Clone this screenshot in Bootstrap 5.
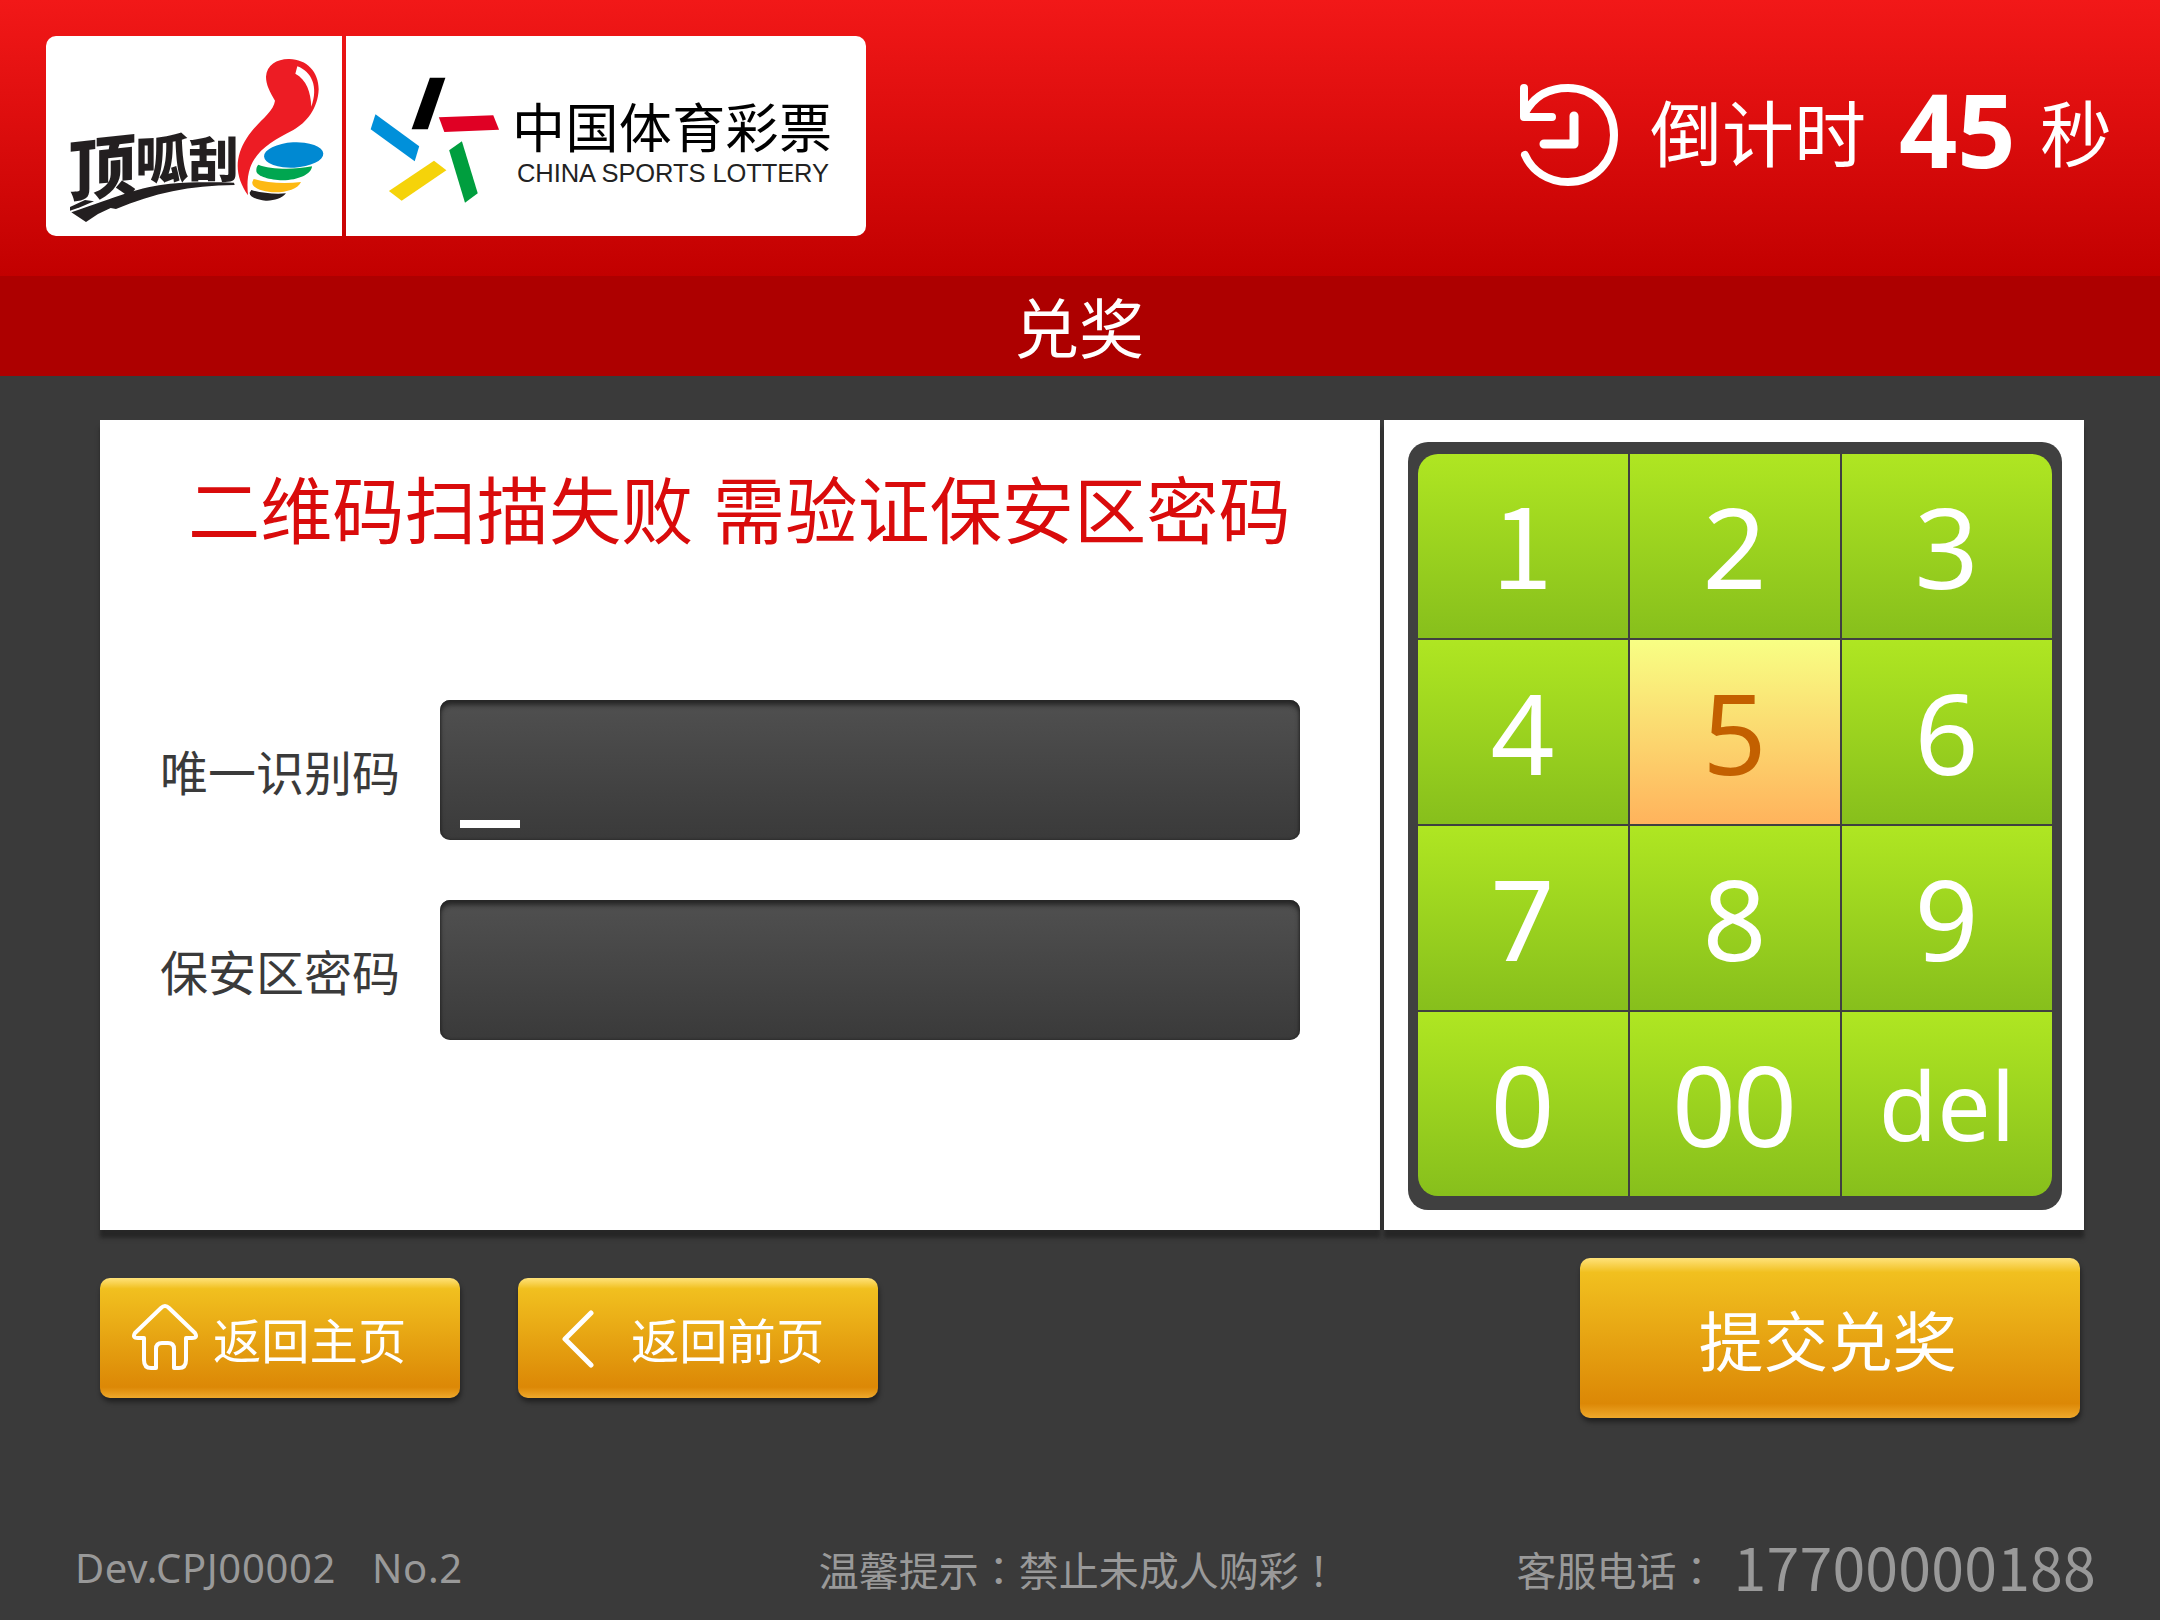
<!DOCTYPE html>
<html lang="zh-CN">
<head>
<meta charset="utf-8">
<title>兑奖</title>
<link href="https://cdn.jsdelivr.net/npm/bootstrap@5.3.0/dist/css/bootstrap.min.css" rel="stylesheet">
<script src="https://cdn.jsdelivr.net/npm/bootstrap@5.3.0/dist/js/bootstrap.bundle.min.js"></script>
<style>
body{width:2160px;height:1620px;overflow:hidden;background:#3a3a3a;font-family:"Noto Sans","Noto Sans CJK SC",sans-serif;line-height:1}
.top-head{height:276px;background:linear-gradient(#f21818,#c20000);padding:36px 48px 0 46px}
.logo-box{height:200px;background:#fff}
.logo-a{width:296px;border-radius:10px 0 0 10px}
.logo-b{width:520px;border-radius:0 10px 10px 0}
.logo-box svg,.ico{display:block}
.countdown{height:198px;font-size:72px}
.countdown>span{padding-bottom:4px}
.clock-ico{margin-right:32px}
.count-num{font-size:102px;font-weight:700;width:119px;margin:-8px 22px 0 33px}
.title-bar{height:100px;background:#ad0000;font-size:65px;padding:5px 2px 0 0}
.main-area{padding:44px 76px 0 100px;gap:4px}
.pane{background:#fff;height:810px;box-shadow:0 8px 4px #262626}
.pane-form{width:1280px}
.pane-keys{width:700px;padding:22px 22px 0 24px}
.fail-msg{color:#d90b0b;font-size:72.2px;height:72px;margin:54px 0 0 88px;white-space:pre;word-spacing:1px}
.form-rows{margin-top:154px;gap:60px;padding-left:60px}
.field-label{width:280px;font-size:48px;color:#3a3a3a;margin-bottom:0;padding-top:6px}
.field-box{width:860px;height:140px;border-radius:10px;background:linear-gradient(#505050,#3a3a3a);box-shadow:inset 0 5px 5px #262626,inset 0 0 3px #222;padding:0 0 12px 20px}
.caret{width:60px;height:8px;background:#fff}
.keypad{width:654px;height:768px;background:#404040;border-radius:20px;padding:12px 10px 14px}
.keys{display:grid;grid-template-columns:repeat(3,210px);grid-auto-rows:184px;gap:2px;border-radius:20px;overflow:hidden;width:634px}
.key{border:0;border-radius:0;padding:0 4px 0 0;line-height:1;font-size:112px;letter-spacing:-3px;color:#fff;background:linear-gradient(#afe622,#87bf1c)}
.key.on{background:linear-gradient(#f8ff84,#ffb35c);color:#c36000}
.key.word{font-size:95px;letter-spacing:0;padding:0}
.key.serif-one{font-family:"Noto Sans CJK SC",sans-serif;font-size:110px;letter-spacing:0;padding:0 2px 11px 0}
.actions{padding:28px 80px 0 100px}
.gold{border:0;border-radius:10px;color:#fff;padding:0;line-height:1;background:linear-gradient(#ffe27a 0,#f1c01f 9%,#dc8806 91%,#efa92c 100%);box-shadow:1px 4px 5px rgba(0,0,0,.45)}
.gold-s{width:360px;height:120px;font-size:48.3px;margin-top:20px}
.gold-s span{padding-top:5px}
.gold-home{padding-left:32px}
.gold-home .ico{margin:-2px 15px 0 0}
.gold-back{margin-left:58px;padding-left:44px}
.gold-back .ico{margin-right:37px;margin-top:2px}
.gold-l{width:500px;height:160px;font-size:64.6px;padding:7px 4px 0 0}
.foot{color:#999;font-size:40px;height:60px;margin-top:120px;padding:0 64px 0 75px}
.dev-id{letter-spacing:.65px}
.foot-zh{font-family:"Noto Sans CJK SC",sans-serif;padding-top:1px}
.foot-zh i{font-style:normal;font-family:"Noto Sans CJK TC",sans-serif}
.phone{font-family:"Noto Sans CJK SC",sans-serif;font-size:59px;letter-spacing:.2px;margin-left:17px;padding-bottom:5px}
</style>
</head>
<body>
<header class="top-head d-flex justify-content-between">
  <div class="d-flex gap-1">
    <div class="logo-box logo-a">
      <svg width="296" height="200" viewBox="18 18 888 600">
        <g fill="#231f20" font-family="'Noto Sans CJK SC',sans-serif" font-weight="900">
          <text font-size="200" transform="translate(86 500) skewY(-6) scale(1.01 1.02)">顶</text>
          <text font-size="160" transform="translate(286 450) skewY(-2)">呱</text>
          <text font-size="150" transform="translate(446 442) scale(1 .95)">刮</text>
          <path d="M90 531L135 510L162 514L120 532L90 542Z"/>
          <path d="M94 547C230 500 300 470 390 461C450 456 520 456 582 458L584 465C450 466 340 490 228 537L212 534L174 552L138 576Z"/>
        </g>
        <path d="M624 496C585 440 582 385 620 325C650 275 700 250 705 212C690 185 678 165 678 140C680 105 712 86 748 87C800 88 836 125 836 178C834 235 800 278 760 300C700 330 650 360 631 412C620 445 622 470 624 496Z" fill="#ed1c24"/>
        <path d="M772 109C815 125 836 170 814 230C812 185 800 150 766 131Z" fill="#fff"/>
        <ellipse cx="761" cy="375" rx="89" ry="38" transform="rotate(-3 761 375)" fill="#0089d2"/>
        <path d="M655 404C690 418 760 420 816 409C815 432 775 451 728 451C690 450 652 440 649 424Q648 410 655 404Z" fill="#00a650"/>
        <path d="M641 447C680 459 735 462 783 456C775 476 740 487 706 487C668 486 634 473 637 456Z" fill="#fdb913"/>
        <path d="M634 480C660 489 705 493 738 490C725 505 702 513 677 512C650 510 628 500 629 488Z" fill="#231f20"/>
      </svg>
    </div>
    <div class="logo-box logo-b">
      <svg width="520" height="200" viewBox="346 36 520 200">
        <g transform="translate(340 30) scale(.34436 .33333)">
          <path d="M261 143H306L255 298H208Z"/>
          <path d="M287 262L445 256L462 299L303 306Z" fill="#e00024"/>
          <path d="M103 253L230 349L217 394L89 298Z" fill="#0090da"/>
          <path d="M142 483L273 392L309 421L179 512Z" fill="#f5d30a"/>
          <path d="M354 334L400 490L363 518L317 361Z" fill="#009e3e"/>
        </g>
        <text x="512" y="148" font-size="53" textLength="320" lengthAdjust="spacing" font-family="'Noto Sans CJK SC',sans-serif">中国体育彩票</text>
        <text x="517" y="182" font-size="25.5" textLength="312" fill="#222" font-family="'Liberation Sans',sans-serif">CHINA SPORTS LOTTERY</text>
      </svg>
    </div>
  </div>
  <div class="countdown d-flex align-items-center text-white">
    <svg class="ico clock-ico" width="98" height="102" viewBox="0 0 98 102" fill="none" stroke="#fff" stroke-width="8" stroke-linecap="round" stroke-linejoin="round"><path d="M4 4V33H32M5 29C14 12 29 4 48 4C74 4 94 24 94 51C94 78 74 98 48 98C28 98 12 87 5 71"/><path d="M54 32V60H24" stroke-width="9"/></svg>
    <span>倒计时</span><span class="count-num">45</span><span>秒</span>
  </div>
</header>
<div class="title-bar text-white d-flex justify-content-center align-items-center">兑奖</div>
<main>
  <div class="main-area d-flex">
    <section class="pane pane-form">
      <div class="fail-msg">二维码扫描失败 需验证保安区密码</div>
      <div class="form-rows d-flex flex-column">
        <div class="d-flex align-items-center"><label class="field-label">唯一识别码</label><div class="field-box d-flex align-items-end"><div class="caret"></div></div></div>
        <div class="d-flex align-items-center"><label class="field-label">保安区密码</label><div class="field-box"></div></div>
      </div>
    </section>
    <section class="pane pane-keys">
      <div class="keypad"><div class="keys">
        <button class="btn key serif-one">1</button><button class="btn key">2</button><button class="btn key">3</button>
        <button class="btn key">4</button><button class="btn key on">5</button><button class="btn key">6</button>
        <button class="btn key">7</button><button class="btn key">8</button><button class="btn key">9</button>
        <button class="btn key">0</button><button class="btn key">00</button><button class="btn key word">del</button>
      </div></div>
    </section>
  </div>
  <div class="actions d-flex align-items-start">
    <button class="btn gold gold-s gold-home d-flex align-items-center"><svg class="ico" width="66" height="66" viewBox="0 0 66 66" fill="none" stroke="#fff" stroke-width="4" stroke-linejoin="round" stroke-linecap="round"><path d="M12 34H6Q0 34 3 29L29 4Q33 0 37 4L63 29Q66 34 60 34H54V56Q54 64 47 64H42V45Q42 39 36 39H30Q24 39 24 45V64H19Q12 64 12 56Z"/></svg><span>返回主页</span></button>
    <button class="btn gold gold-s gold-back d-flex align-items-center"><svg class="ico" width="32" height="58" viewBox="0 0 32 58" fill="none" stroke="#fff" stroke-width="5" stroke-linecap="round" stroke-linejoin="round"><path d="M29 3L3 29L29 55"/></svg><span>返回前页</span></button>
    <button class="btn gold gold-l ms-auto">提交兑奖</button>
  </div>
</main>
<footer class="foot d-flex align-items-center">
  <span class="dev-id">Dev.CPJ00002</span><span class="dev-id" style="margin-left:36px">No.2</span>
  <span class="foot-zh" style="margin-left:356px">温馨提示<i lang="zh-TW">：</i>禁止未成人购彩<i lang="zh-TW">！</i></span>
  <span class="foot-zh ms-auto">客服电话<i lang="zh-TW">：</i></span><span class="phone">17700000188</span>
</footer>
</body>
</html>
